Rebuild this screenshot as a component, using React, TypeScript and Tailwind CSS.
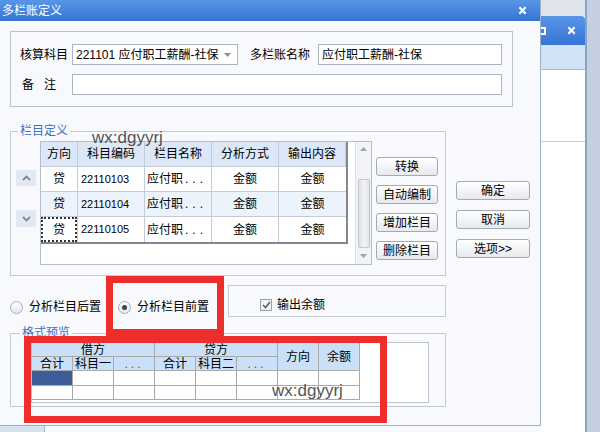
import React from "react";

/* ── data ─────────────────────────────────────────── */
const headCols = ["方向", "科目编码", "栏目名称", "分析方式", "输出内容"];
const rows = [
  { dir: "贷", code: "22110103", name: "应付职", how: "金额", out: "金额" },
  { dir: "贷", code: "22110104", name: "应付职", how: "金额", out: "金额" },
  { dir: "贷", code: "22110105", name: "应付职", how: "金额", out: "金额" },
];

function Chevron({ up }: { up?: boolean }) {
  return (
    <svg width="9" height="6" viewBox="0 0 9 6">
      <path
        d={up ? "M1 5 L4.5 1.5 L8 5" : "M1 1 L4.5 4.5 L8 1"}
        fill="none"
        stroke="#7d8a9a"
        strokeWidth="1.8"
      />
    </svg>
  );
}

function Btn({ label, wide }: { label: string; wide?: boolean }) {
  return (
    <div
      className={
        (wide ? "w-[74px] " : "w-[62px] ") +
        "h-[19px] flex items-center justify-center rounded-[3px] border border-[#a2aab5] bg-linear-to-b from-white to-[#e7e9ed] text-[12px] leading-none text-black"
      }
    >
      {label}
    </div>
  );
}

function XIcon({ size }: { size: number }) {
  return (
    <svg width={size} height={size} viewBox="0 0 10 10">
      <path d="M1.5 1.5 L8.5 8.5 M8.5 1.5 L1.5 8.5" stroke="#fff" strokeWidth="2.4" />
    </svg>
  );
}

/* ── 栏目定义 grid ───────────────────────────────────── */
function ColumnGrid() {
  return (
    <div className="ml-[4px] w-[332px] h-[124px] border border-[#b5bec9] bg-white flex">
      <div className="w-[314px]">
        <div className="w-[307px] grid grid-cols-[37px_67px_67px_67px_67px] border-r-2 border-b-2 border-[#7f8793]">
          {headCols.map((h) => (
            <div
              key={h}
              className="h-[25px] flex items-center justify-center bg-[#dce8f7] border-r border-b border-[#c3ccd8] last:border-r-0"
            >
              {h}
            </div>
          ))}
          {rows.map((r, i) => {
            const bg = i === 1 ? "bg-[#edf3fb]" : "bg-white";
            const last = i === rows.length - 1;
            const cell = "h-[25px] flex items-center border-r border-[#c3ccd8] " + bg + (last ? "" : " border-b");
            return (
              <React.Fragment key={r.code}>
                <div className={cell + " justify-center"}>
                  {last ? (
                    <div className="w-full h-full flex items-center justify-center outline-2 outline-dotted outline-[#333] -outline-offset-2">
                      {r.dir}
                    </div>
                  ) : (
                    r.dir
                  )}
                </div>
                <div className={cell + " pl-[3px] text-[11px]"}>{r.code}</div>
                <div className={cell + " pl-[2px]"}>
                  {r.name}
                  <span className="tracking-[4px] ml-[2px]">...</span>
                </div>
                <div className={cell + " justify-center"}>{r.how}</div>
                <div className={cell + " justify-center border-r-0"}>{r.out}</div>
              </React.Fragment>
            );
          })}
        </div>
      </div>
      {/* scrollbar */}
      <div className="w-[16px] h-full border-l border-[#dadfe6] bg-[#f1f3f6] flex flex-col items-center">
        <svg className="mt-[5px]" width="7" height="4" viewBox="0 0 7 4">
          <path d="M0 4 L3.5 0 L7 4 Z" fill="#9aa3ae" />
        </svg>
        <div className="mt-[28px] w-[12px] h-[69px] rounded-[2px] border border-[#c2c7ce] bg-linear-to-r from-[#dcdfe4] via-[#f3f4f6] to-[#e2e5e9]" />
        <svg className="mt-auto mb-[6px]" width="7" height="4" viewBox="0 0 7 4">
          <path d="M0 0 L3.5 4 L7 0 Z" fill="#9aa3ae" />
        </svg>
      </div>
    </div>
  );
}

/* ── 格式预览 table ──────────────────────────────────── */
function PreviewTable() {
  const hd = "bg-[#c9e0f8] border-r border-b border-[#a9a9a9] flex items-center justify-center leading-[14px]";
  const td = "bg-white border-r border-b border-[#a9a9a9]";
  return (
    <div className="mt-[2px] ml-[20px] w-[398px] h-[61px] bg-white border border-[#bcc5d0]">
      <div className="w-[328px] grid grid-cols-[41px_41px_41px_41px_41px_41px_41px_41px] grid-rows-[14px_14px_15px_14px]">
        <div className={hd + " col-span-3"}>借方</div>
        <div className={hd + " col-span-3"}>贷方</div>
        <div className={hd + " row-span-2"}>方向</div>
        <div className={hd + " row-span-2"}>余额</div>
        <div className={hd}>合计</div>
        <div className={hd}>科目一</div>
        <div className={hd + " tracking-[3px] text-[#555]"}>...</div>
        <div className={hd}>合计</div>
        <div className={hd}>科目二</div>
        <div className={hd + " tracking-[3px] text-[#555]"}>...</div>
        <div className="bg-[#3e5c99] border-r border-b border-[#a9a9a9]" />
        {Array.from({ length: 7 }).map((_, i) => (
          <div key={"a" + i} className={td} />
        ))}
        {Array.from({ length: 8 }).map((_, i) => (
          <div key={"b" + i} className={td} />
        ))}
      </div>
    </div>
  );
}

/* ── MAIN ─────────────────────────────────────────── */
export default function App() {
  return (
    <div className="relative flex w-[600px] h-[432px] overflow-hidden bg-[#f5f7fa] font-['Liberation_Sans','Noto_Sans_CJK_SC',sans-serif] text-[12px] text-black">
      {/* dialog column */}
      <div className="w-[541px] shrink-0 flex flex-col">
        <div className="h-[426px] flex flex-col bg-[#f7f9fc] border-r border-b border-[#9eb0c7]">
          {/* title bar */}
          <div className="h-[21px] shrink-0 flex items-center justify-between pl-[2px] pr-[13px] bg-linear-to-b from-[#5896e8] to-[#3674d4] text-white text-[12px]">
            <span className="leading-none">多栏账定义</span>
            <XIcon size={9} />
          </div>

          {/* top box */}
          <div className="ml-[10px] mt-[10px] w-[503px] h-[76px] shrink-0 border border-[#b9c1cc] flex flex-col gap-[9px] pt-[12px] pl-[9px]">
            <div className="flex items-center h-[21px]">
              <span className="w-[52px]">核算科目</span>
              <div className="w-[166px] h-[21px] bg-white border border-[#aab4c2] flex items-center justify-between pl-[3px] pr-[6px]">
                <span>221101 应付职工薪酬-社保</span>
                <svg width="7" height="4" viewBox="0 0 7 4">
                  <path d="M0 0 L3.5 4 L7 0 Z" fill="#8a929c" />
                </svg>
              </div>
              <span className="ml-[12px] w-[68px]">多栏账名称</span>
              <div className="w-[184px] h-[21px] bg-white border border-[#aab4c2] flex items-center pl-[3px]">
                应付职工薪酬-社保
              </div>
            </div>
            <div className="flex items-center h-[21px]">
              <span className="w-[52px] pl-[2px]">
                备<span className="ml-[10px]">注</span>
              </span>
              <div className="w-[430px] h-[21px] bg-white border border-[#aab4c2]" />
            </div>
          </div>

          {/* 栏目定义 + action buttons */}
          <div className="flex mt-[17px] shrink-0">
            <fieldset className="ml-[10px] w-[436px] h-[152px] border border-[#c3cad4]">
              <legend className="ml-[7px] px-[2px] leading-[14px] text-[#3d70c6]">栏目定义</legend>
              <div className="flex pt-[3px] pl-[5px]">
                <div className="w-[20px] flex flex-col pt-[29px]">
                  <div className="h-[16px] bg-[#e2e9f2] flex items-center justify-center">
                    <Chevron up />
                  </div>
                  <div className="mt-[24px] h-[17px] bg-[#e2e9f2] flex items-center justify-center">
                    <Chevron />
                  </div>
                </div>
                <ColumnGrid />
                <div className="ml-[4px] pt-[16px] flex flex-col gap-[9px]">
                  <Btn label="转换" />
                  <Btn label="自动编制" />
                  <Btn label="增加栏目" />
                  <Btn label="删除栏目" />
                </div>
              </div>
            </fieldset>
            <div className="ml-[10px] mt-[57px] flex flex-col gap-[10px]">
              <Btn label="确定" wide />
              <Btn label="取消" wide />
              <Btn label="选项>>" wide />
            </div>
          </div>

          {/* radios + checkbox */}
          <div className="flex mt-[9px] h-[32px] shrink-0">
            <div className="ml-[10px] flex items-center pt-[12px]">
              <span className="w-[13px] h-[13px] rounded-full border border-[#a7adb6] bg-linear-to-b from-white to-[#e4e7eb]" />
              <span className="ml-[6px]">分析栏目后置</span>
              <span className="ml-[17px] w-[13px] h-[13px] rounded-full border border-[#a7adb6] bg-linear-to-b from-white to-[#e4e7eb] flex items-center justify-center">
                <span className="w-[5px] h-[5px] rounded-full bg-[#444]" />
              </span>
              <span className="ml-[6px]">分析栏目前置</span>
            </div>
            <div className="ml-[19px] w-[218px] h-[32px] border border-[#c3cad4] flex items-center pl-[31px] pt-[8px]">
              <span className="w-[12px] h-[12px] border border-[#9aa2ac] bg-[#f1f3f6] flex items-center justify-center">
                <svg width="9" height="8" viewBox="0 0 9 8">
                  <path d="M1 4 L3.5 6.5 L8 1" fill="none" stroke="#5a5f66" strokeWidth="1.6" />
                </svg>
              </span>
              <span className="ml-[5px]">输出余额</span>
            </div>
          </div>

          {/* 格式预览 */}
          <fieldset className="mt-[9px] ml-[10px] w-[436px] h-[81px] shrink-0 border border-[#c3cad4]">
            <legend className="ml-[9px] px-[2px] leading-[14px] text-[#3d70c6]">格式预览</legend>
            <PreviewTable />
          </fieldset>
        </div>
        <div className="flex-1 flex">
          <div className="w-[45px] bg-[#d6e2f0] border-r border-[#9eb0c7]" />
          <div className="flex-1 bg-[#f7f9fb]" />
        </div>
      </div>

      {/* window behind, right side */}
      <div className="flex-1 flex">
        <div className="w-[44px] flex flex-col">
          <div className="h-[16px] bg-[#dfe4ea]" />
          <div className="h-[29px] rounded-tr-[4px] bg-linear-to-b from-[#5896e8] to-[#3674d4] flex items-center pr-[9px]">
            <span className="w-[5px] h-[8px] border-2 border-l-0 border-white" />
            <span className="ml-auto">
              <XIcon size={9} />
            </span>
          </div>
          <div className="h-[25px] bg-[#d2e2f6] border-b border-[#a9bdd5]" />
          <div className="h-[72px] bg-white border-b border-[#c6d0dc]" />
          <div className="flex-1 bg-white" />
        </div>
        <div className="flex-1 border-l-2 border-[#8aa4c8] bg-[#c4d0df]" />
      </div>

      {/* annotations over the screenshot */}
      <div className="absolute left-[106px] top-[276px] w-[118px] h-[60px] border-[7px] border-[#ee2d2d]" />
      <div className="absolute left-[24px] top-[336px] w-[363px] h-[87px] border-[7px] border-[#ee2d2d]" />
      <div className="absolute left-[92px] top-[129px] text-[17px] leading-none text-[#555]">wx:dgyyrj</div>
      <div className="absolute left-[272px] top-[382px] text-[17px] leading-none text-[#555]">wx:dgyyrj</div>
    </div>
  );
}
